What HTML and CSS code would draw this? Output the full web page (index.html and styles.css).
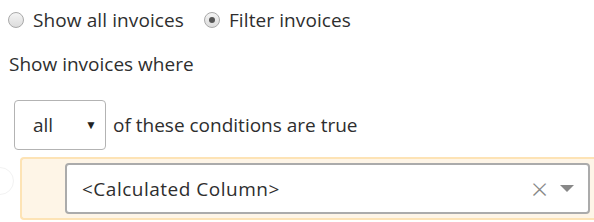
FILE: index.html
```html
<!DOCTYPE html>
<html>

<head>
    <meta charset="utf-8" />
    <title>Invoice filter</title>
    <link rel="stylesheet" href="styles.css">
</head>

<body>
    <div class="main">
        <!--Mode choice-->
        <div class="mode-row">
            <label class="radio"><span class="radio-dot"></span>Show all invoices</label>
            <label class="radio"><span class="radio-dot checked"></span>Filter invoices</label>
        </div>
        <div class="where-text">Show invoices where</div>
        <!--Match type-->
        <div class="match-row">
            <span class="select-box">
                <span>all</span>
                <span class="select-arrow">&#9660;</span>
            </span>
            <span>of these conditions are true</span>
        </div>
        <!--Condition list-->
        <div class="condition-area">
            <span class="handle"></span>
            <div class="condition">
                <div class="combo">
                    <span class="combo-text">&lt;Calculated Column&gt;</span>
                    <span class="combo-clear">&#215;</span>
                    <span class="combo-arrow"></span>
                </div>
            </div>
        </div>
    </div>
</body>

</html>
```

FILE: styles.css
```css
* {
    padding: 0;
    margin: 0;
    box-sizing: border-box;
}

body {
    font-family: 'Open Sans', 'Lato', sans-serif;
    font-size: 19px;
    line-height: 24px;
    color: #2e2e2e;
    background-color: white;
    overflow: hidden;
}

.main {
    padding: 9px 0 0 8px;
}

.mode-row {
    display: flex;
    align-items: center;
    height: 22px;
}

.radio {
    display: flex;
    align-items: center;
    margin-right: 20px;
    letter-spacing: 0.1px;
}

.radio-dot {
    width: 16px;
    height: 16px;
    border: solid #a9a9a9 1px;
    border-radius: 50%;
    background: linear-gradient(#f4f4f4, #dcdcdc);
    margin-right: 9px;
    position: relative;
}

.checked::after {
    content: "";
    position: absolute;
    left: 4px;
    top: 4px;
    width: 6px;
    height: 6px;
    border-radius: 50%;
    background-color: #555;
}

.where-text {
    margin-top: 21px;
    padding-left: 1px;
}

.match-row {
    display: flex;
    align-items: center;
    margin-top: 24px;
    padding-left: 6px;
}

.select-box {
    display: flex;
    align-items: center;
    justify-content: space-between;
    width: 92px;
    height: 50px;
    border: solid #b3b3b3 1px;
    border-radius: 4px;
    padding: 0 8px 0 18px;
    margin-right: 7px;
}

.select-arrow {
    font-size: 12px;
    color: #222;
}

.condition-area {
    position: relative;
    margin-top: 7px;
    padding-left: 12px;
}

.handle {
    position: absolute;
    left: -22px;
    top: 10px;
    width: 28px;
    height: 28px;
    border: solid #f2f2f2 1px;
    border-radius: 50%;
}

.condition {
    background-color: #fef5e7;
    border: solid #fde3b5 2px;
    border-right: none;
    border-radius: 4px 0 0 4px;
    margin-right: -10px;
    padding: 4px 14px 4px 43px;
}

.combo {
    display: flex;
    align-items: center;
    height: 51px;
    background-color: white;
    border: solid #ababab 2px;
    border-radius: 4px;
    padding: 0 14px 0 15px;
}

.combo-text {
    flex: 1;
    letter-spacing: 0.5px;
}

.combo-clear {
    font-size: 30px;
    font-weight: 300;
    color: #888;
    margin-right: 12px;
    line-height: 1;
}

.combo-arrow {
    width: 0;
    height: 0;
    border-left: 7px solid transparent;
    border-right: 7px solid transparent;
    border-top: 7px solid #888;
}
```
